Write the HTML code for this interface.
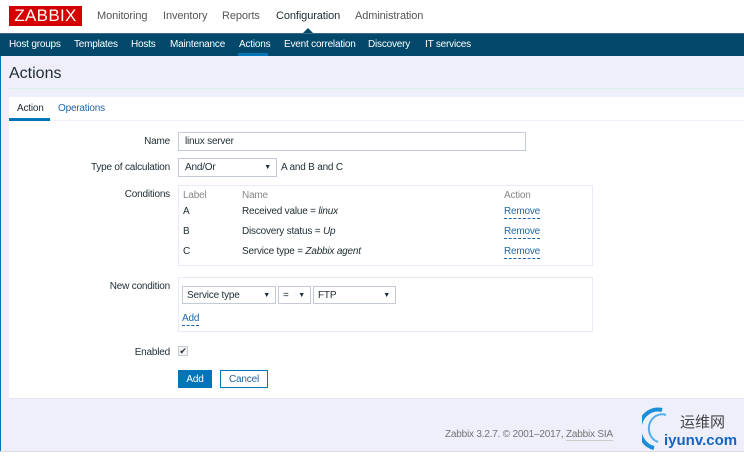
<!DOCTYPE html>
<html><head><meta charset="utf-8"><style>
*{margin:0;padding:0;box-sizing:border-box}
body{width:744px;height:456px;overflow:hidden;background:#efeffc;font-family:"Liberation Sans",Arial,sans-serif;font-size:10px;letter-spacing:-0.2px;color:#1f2c33;position:relative}
.a{position:absolute;white-space:nowrap}
.top{position:absolute;left:0;top:0;width:744px;height:33px;background:#fff}
.menu{font-size:11px;letter-spacing:-0.1px;color:#555;top:10px}
.nav{position:absolute;left:0;top:33px;width:744px;height:23px;background:#02486a;border-top:1px solid #3a6a85}
.nav span{position:absolute;top:5px;color:#fff;font-size:10px}
.lbl{right:574px;text-align:right;color:#1f2c33}
.box{position:absolute;border:1px solid #e8ebf7;background:#fff}
.inp{position:absolute;border:1px solid #c4cad6;background:#fff;padding:0 6px;line-height:17px}
.sel:after{content:"▼";position:absolute;right:5px;top:0;font-size:7px}
.lnk{color:#1f65a6;border-bottom:1px dashed #1f65a6;line-height:12px}
.g{color:#888}
</style></head><body>
<div class="top"></div>
<div class="a" style="left:9px;top:6px;width:73px;height:20px;background:#d40000;color:#fff;font-size:17px;line-height:20px;text-align:center;letter-spacing:0.3px">ZABBIX</div>
<div class="a menu" style="left:97px">Monitoring</div>
<div class="a menu" style="left:163px">Inventory</div>
<div class="a menu" style="left:222px">Reports</div>
<div class="a menu" style="left:276px;color:#1f2c33">Configuration</div>
<div class="a menu" style="left:355px">Administration</div>
<div class="a" style="left:303px;top:28px;width:0;height:0;border-left:5px solid transparent;border-right:5px solid transparent;border-bottom:5px solid #02486a"></div>
<div class="nav">
<span style="left:9px">Host groups</span><span style="left:74px">Templates</span><span style="left:131px">Hosts</span><span style="left:170px">Maintenance</span><span style="left:239px">Actions</span><span style="left:284px">Event correlation</span><span style="left:368px">Discovery</span><span style="left:425px">IT services</span>
<div style="position:absolute;left:238px;top:19px;width:30px;height:3px;background:#0275b8"></div>
</div>
<div class="a" style="left:0;top:56px;width:1px;height:395px;background:#0275b8"></div>
<div class="a" style="left:9px;top:65px;font-size:16px;letter-spacing:0">Actions</div>
<div class="a" style="left:9px;top:88px;width:735px;height:1px;background:#dbeeea"></div>
<div class="a" style="left:9px;top:97px;width:735px;height:302px;background:#fff;border-bottom:1px solid #e4e6f5"></div>
<div class="a" style="left:17px;top:103px">Action</div>
<div class="a" style="left:58px;top:103px;color:#1f65a6">Operations</div>
<div class="a" style="left:9px;top:120px;width:735px;height:1px;background:#efeffc"></div>
<div class="a" style="left:9px;top:118px;width:41px;height:3px;background:#0275b8"></div>

<div class="a lbl" style="top:136px">Name</div>
<div class="inp" style="left:178px;top:132px;width:348px;height:19px">linux server</div>
<div class="a lbl" style="top:162px">Type of calculation</div>
<div class="inp sel" style="left:178px;top:158px;width:99px;height:19px">And/Or</div>
<div class="a" style="left:281px;top:162px">A and B and C</div>

<div class="a lbl" style="top:189px">Conditions</div>
<div class="box" style="left:178px;top:185px;width:415px;height:81px"></div>
<div class="a g" style="left:183px;top:190px">Label</div>
<div class="a g" style="left:242px;top:190px">Name</div>
<div class="a g" style="left:504px;top:190px">Action</div>
<div class="a" style="left:183px;top:206px">A</div><div class="a" style="left:242px;top:206px">Received value = <i>linux</i></div><div class="a lnk" style="left:504px;top:206px">Remove</div>
<div class="a" style="left:183px;top:226px">B</div><div class="a" style="left:242px;top:226px">Discovery status = <i>Up</i></div><div class="a lnk" style="left:504px;top:226px">Remove</div>
<div class="a" style="left:183px;top:246px">C</div><div class="a" style="left:242px;top:246px">Service type = <i>Zabbix agent</i></div><div class="a lnk" style="left:504px;top:246px">Remove</div>

<div class="a lbl" style="top:281px">New condition</div>
<div class="box" style="left:178px;top:277px;width:415px;height:55px"></div>
<div class="inp sel" style="left:182px;top:286px;width:94px;height:18px;padding-left:4px">Service type</div>
<div class="inp sel" style="left:278px;top:286px;width:33px;height:18px;padding-left:4px">=</div>
<div class="inp sel" style="left:313px;top:286px;width:83px;height:18px;padding-left:4px">FTP</div>
<div class="a lnk" style="left:182px;top:313px">Add</div>

<div class="a lbl" style="top:347px">Enabled</div>
<div class="a" style="left:178px;top:346px;width:10px;height:10px;border:1px solid #c4cad6;background:#f4f4f4;font-size:9px;line-height:8px;text-align:center">✔</div>
<div class="a" style="left:178px;top:370px;width:34px;height:18px;background:#0275b8;color:#fff;text-align:center;line-height:19px">Add</div>
<div class="a" style="left:220px;top:370px;width:48px;height:18px;border:1px solid #0275b8;color:#1f65a6;text-align:center;line-height:17px">Cancel</div>

<div class="a" style="left:445px;top:429px;color:#737373">Zabbix 3.2.7. © 2001–2017, <span style="border-bottom:1px solid #ccc">Zabbix SIA</span></div>
<div class="a" style="left:0;top:451px;width:744px;height:5px;background:#fff;border-top:1px solid #dcdce6"></div>
<svg class="a" style="left:642px;top:406px" width="30" height="46"><path d="M20 4 A18 19 0 0 0 12 42" fill="none" stroke="#1a8fd8" stroke-width="4"/><path d="M24 9 A13 14 0 0 0 16 36" fill="none" stroke="#4bb0ec" stroke-width="2"/></svg>
<div class="a" style="left:680px;top:411px;font-size:15px;letter-spacing:0;color:#444;font-family:'Liberation Sans','Noto Sans CJK SC',sans-serif">运维网</div>
<div class="a" style="left:664px;top:432px;font-size:15px;letter-spacing:0;font-weight:bold;color:#1565c0">iyunv.com</div>
</body></html>
